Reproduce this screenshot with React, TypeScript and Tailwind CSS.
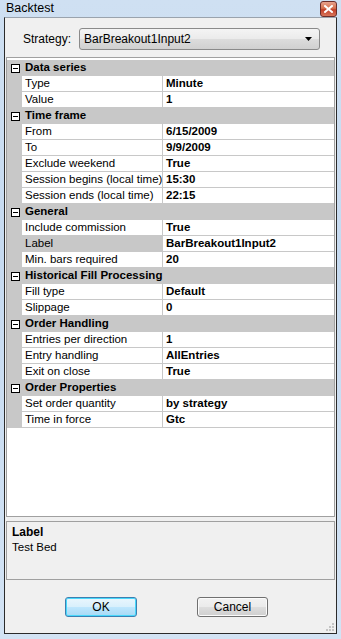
import React from "react";

type Row = { label: string; value: string; selected?: boolean };
type Category = { title: string; rows: Row[] };

const categories: Category[] = [
  {
    title: "Data series",
    rows: [
      { label: "Type", value: "Minute" },
      { label: "Value", value: "1" },
    ],
  },
  {
    title: "Time frame",
    rows: [
      { label: "From", value: "6/15/2009" },
      { label: "To", value: "9/9/2009" },
      { label: "Exclude weekend", value: "True" },
      { label: "Session begins (local time)", value: "15:30" },
      { label: "Session ends (local time)", value: "22:15" },
    ],
  },
  {
    title: "General",
    rows: [
      { label: "Include commission", value: "True" },
      { label: "Label", value: "BarBreakout1Input2", selected: true },
      { label: "Min. bars required", value: "20" },
    ],
  },
  {
    title: "Historical Fill Processing",
    rows: [
      { label: "Fill type", value: "Default" },
      { label: "Slippage", value: "0" },
    ],
  },
  {
    title: "Order Handling",
    rows: [
      { label: "Entries per direction", value: "1" },
      { label: "Entry handling", value: "AllEntries" },
      { label: "Exit on close", value: "True" },
    ],
  },
  {
    title: "Order Properties",
    rows: [
      { label: "Set order quantity", value: "by strategy" },
      { label: "Time in force", value: "Gtc" },
    ],
  },
];

const font = { fontFamily: '"Liberation Sans", Arial, sans-serif' };

export default function App() {
  return (
    <div
      className="w-[341px] h-[639px] flex flex-col bg-[linear-gradient(180deg,#cfe0f2_0%,#c6daf0_40%,#d3e3f4_100%)] text-[11.5px] text-black overflow-hidden"
      style={font}
    >
      <TitleBar />
      <div className="ml-[4px] w-[333px] h-[617px] flex flex-col border border-[#2b2b2b] border-t-[#9aa3ad] bg-[#f0f0f0]">
        <StrategyRow />
        <PropertyGrid />
        <HelpPanel />
        <Buttons />
        <div className="flex-1 flex items-end justify-end pr-[2px] pb-[2px]">
          <Grip />
        </div>
      </div>
    </div>
  );
}

function TitleBar() {
  return (
    <div className="h-[17px] flex items-start justify-between pl-[6px] pr-[4px]">
      <span className="text-[12.5px] leading-[15px] pt-[1px] text-black">Backtest</span>
      <div className="mt-[1px] w-[17px] h-[16px] rounded-[3px] border border-[#6b2d2a] bg-[linear-gradient(180deg,#e8a38e_0%,#d4714f_45%,#c2402a_55%,#d8755a_100%)] flex items-center justify-center">
        <svg width="9" height="8" viewBox="0 0 9 8">
          <path d="M1 1 L8 7 M8 1 L1 7" stroke="#ffffff" strokeWidth="2" strokeLinecap="square" />
        </svg>
      </div>
    </div>
  );
}

function StrategyRow() {
  return (
    <div className="flex items-center h-[22px] mt-[10px] mb-[7px]">
      <span className="pl-[18px] w-[74px] text-[12px]">Strategy:</span>
      <div className="w-[241px] h-[22px] rounded-[3px] border border-[#8a8a8a] bg-[linear-gradient(180deg,#f4f4f4_0%,#ebebeb_48%,#dcdcdc_52%,#d0d0d0_100%)] flex items-center justify-between pl-[4px] pr-[7px]">
        <span className="text-[12px]">BarBreakout1Input2</span>
        <svg width="7" height="4" viewBox="0 0 7 4">
          <path d="M0 0 H7 L3.5 4 Z" fill="#000" />
        </svg>
      </div>
    </div>
  );
}

function MinusBox() {
  return (
    <div className="w-[9px] h-[9px] border border-[#000] bg-white flex items-center justify-center">
      <div className="w-[5px] h-[1px] bg-black" />
    </div>
  );
}

function PropertyGrid() {
  return (
    <div className="ml-[1px] w-[329px] h-[460px] border border-[#a0a0a0] bg-white pt-[2px] flex flex-col">
      {categories.map((cat) => (
        <div key={cat.title} className="flex flex-col">
          <div className="h-[16px] flex items-center bg-[#c8c8c8]">
            <div className="w-[16px] flex items-center justify-center pl-[1px]">
              <MinusBox />
            </div>
            <span className="pl-[2px] font-bold">{cat.title}</span>
          </div>
          {cat.rows.map((row) => (
            <div key={row.label} className="h-[16px] flex bg-[#c8c8c8]">
              <div className="w-[15px] shrink-0" />
              <div
                className={
                  row.selected
                    ? "w-[141px] shrink-0 border-b border-r border-[#c8c8c8] bg-[#c8c8c8] pl-[3px] leading-[15px] whitespace-nowrap overflow-hidden"
                    : "w-[141px] shrink-0 border-b border-r border-[#c8c8c8] bg-white pl-[3px] leading-[15px] whitespace-nowrap overflow-hidden"
                }
              >
                {row.label}
              </div>
              <div className="flex-1 border-b border-[#c8c8c8] bg-white pl-[3px] leading-[15px] font-bold">
                {row.value}
              </div>
            </div>
          ))}
        </div>
      ))}
    </div>
  );
}

function HelpPanel() {
  return (
    <div className="ml-[1px] mt-[4px] w-[329px] h-[59px] border border-[#a0a0a0] bg-[#f0f0f0] pl-[5px] pt-[3px] leading-[15px]">
      <div className="font-bold text-[12px]">Label</div>
      <div>Test Bed</div>
    </div>
  );
}

function Buttons() {
  return (
    <div className="mt-[17px] h-[20px] flex">
      <button className="ml-[60px] w-[72px] h-[20px] rounded-[3px] border border-[#3c7fb1] shadow-[inset_0_0_0_1px_#48d8fb] bg-[linear-gradient(180deg,#eaf6fd_0%,#d9f0fc_48%,#bee6fd_52%,#a7d9f5_100%)] text-[12px] leading-[18px]">
        OK
      </button>
      <button className="ml-[60px] w-[71px] h-[20px] rounded-[3px] border border-[#707070] shadow-[inset_0_0_0_1px_#fbfbfb] bg-[linear-gradient(180deg,#f2f2f2_0%,#ebebeb_48%,#dddddd_52%,#cfcfcf_100%)] text-[12px] leading-[18px]">
        Cancel
      </button>
    </div>
  );
}

function Grip() {
  const dots = [
    [6, 0],
    [3, 3],
    [6, 3],
    [0, 6],
    [3, 6],
    [6, 6],
  ];
  return (
    <svg width="9" height="9" viewBox="0 0 9 9">
      {dots.map(([x, y]) => (
        <rect key={`${x}-${y}`} x={x + 1} y={y + 1} width="2" height="2" fill="#c4c4c4" />
      ))}
    </svg>
  );
}
